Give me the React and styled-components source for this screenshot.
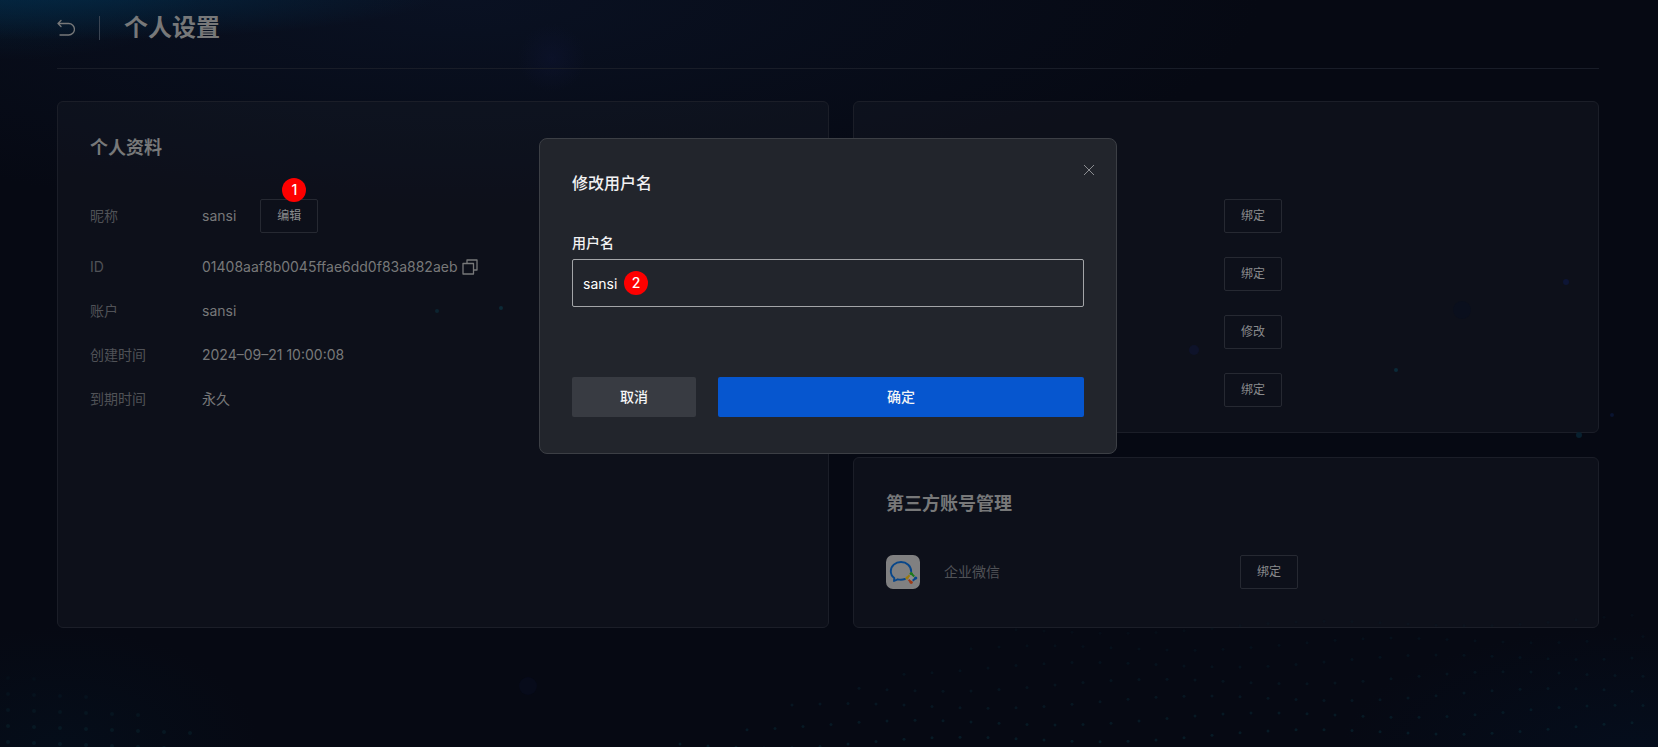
import React, { useState } from "react";
import styled, { createGlobalStyle } from "styled-components";

const Global = createGlobalStyle`
  * { box-sizing: border-box; }
  body {
    margin: 0;
    background: #060913;
    color: #777879;
    font-family: Inter, "Noto Sans CJK SC", sans-serif;
    font-size: 14px;
    line-height: 20px;
  }
  button, input { font: inherit; }
`;

const Page = styled.div`
  position: relative;
  min-height: 100vh;
  padding: 0 59px 0 57px;
  overflow: hidden;
  background:
    radial-gradient(ellipse 380px 50px at 70px -10px, rgba(3, 44, 74, 0.8), rgba(3, 44, 74, 0)),
    radial-gradient(ellipse 200px 60px at 0 0, rgba(4, 38, 62, 0.5), rgba(4, 38, 62, 0)),
    radial-gradient(circle 34px at 552px 58px, rgba(14, 20, 50, 0.5), rgba(14, 20, 50, 0)),
    radial-gradient(ellipse 800px 220px at 460px 0, rgba(10, 18, 36, 0.9), rgba(10, 18, 36, 0)),
    radial-gradient(ellipse 300px 120px at 1640px 747px, rgba(4, 16, 34, 0.6), rgba(4, 16, 34, 0)),
    radial-gradient(ellipse 200px 120px at 60px 747px, rgba(4, 16, 30, 0.6), rgba(4, 16, 30, 0)),
    #060913;
`;

const Particles = styled.svg`
  position: absolute;
  inset: 0;
  width: 100%;
  height: 100%;
  pointer-events: none;
`;

const Header = styled.header`
  display: flex;
  align-items: center;
  height: 69px;
  padding-bottom: 12px;
  border-bottom: 1px solid #191d28;
`;

const IconButton = styled.button`
  display: flex;
  padding: 0;
  border: 0;
  background: none;
  color: inherit;
  cursor: pointer;
`;

const Divider = styled.span`
  width: 1px;
  height: 24px;
  margin: 0 24px;
  background: #3a4452;
`;

const PageTitle = styled.h1`
  margin: 0;
  font-size: 24px;
  line-height: 32px;
  font-weight: 600;
`;

const Columns = styled.main`
  display: grid;
  grid-template-columns: 772fr 746fr;
  gap: 24px;
  margin-top: 32px;
`;

const Stack = styled.div`
  display: flex;
  flex-direction: column;
  gap: 24px;
`;

const Card = styled.section`
  padding: 32px 32px ${(p) => (p.$compact ? 25 : 38)}px;
  border: 1px solid #1b1e28;
  border-radius: 6px;
  background: rgba(30, 33, 42, 0.3);
`;

const CardTitle = styled.h2`
  margin: 0;
  font-size: 18px;
  line-height: 28px;
  font-weight: 600;
`;

const ProfileList = styled.dl`
  display: flex;
  flex-direction: column;
  gap: 24px;
  margin: 37px 0 0;
`;

const ProfileRow = styled.div`
  display: grid;
  grid-template-columns: 112px 1fr;
  align-items: center;
`;

const Term = styled.dt`
  color: #505257;
`;

const Detail = styled.dd`
  display: flex;
  align-items: center;
  gap: ${(p) => p.$gap || 0}px;
  margin: 0;
`;

const OutlineButton = styled.button`
  position: relative;
  width: 58px;
  height: 34px;
  padding: 0;
  border: 1px solid #262932;
  border-radius: 2px;
  background: none;
  color: #8a8b8d;
  font-size: 12px;
  cursor: pointer;
`;

const Badge = styled.span`
  display: flex;
  align-items: center;
  justify-content: center;
  width: 24px;
  height: 24px;
  border-radius: 50%;
  background: #fe0000;
  color: #fff;
  font-size: 14px;
  font-weight: 500;
`;

const EditBadge = styled(Badge)`
  position: absolute;
  top: -22px;
  left: 21px;
`;

const ActionList = styled.div`
  display: flex;
  flex-direction: column;
  gap: 24px;
  margin-top: 37px;
  padding-left: 338px;
`;

const PartnerRow = styled.div`
  display: grid;
  grid-template-columns: 58px 296px auto;
  align-items: center;
  margin-top: 37px;
  color: #505257;
`;

const Overlay = styled.div`
  position: fixed;
  inset: 0;
  display: flex;
  align-items: flex-start;
  justify-content: center;
  padding: 138px 2px 0 0;
`;

const Dialog = styled.form`
  position: relative;
  width: 578px;
  max-width: 100%;
  padding: 32px 32px 36px;
  border: 1px solid #3c3f45;
  border-radius: 8px;
  background: #22252c;
  color: #f2f2f3;
`;

const DialogTitle = styled.h2`
  margin: 0;
  font-size: 16px;
  line-height: 24px;
  font-weight: 500;
`;

const CloseButton = styled(IconButton)`
  position: absolute;
  top: 25px;
  right: 21px;
  color: #8b8d91;
`;

const Label = styled.label`
  display: block;
  margin-top: 38px;
  font-weight: 500;
`;

const Field = styled.div`
  position: relative;
  margin-top: 6px;
`;

const TextInput = styled.input`
  width: 100%;
  height: 48px;
  padding: 0 10px;
  border: 1px solid #a3a5a8;
  border-radius: 2px;
  outline: none;
  background: transparent;
  color: #fff;
`;

const FieldBadge = styled(Badge)`
  position: absolute;
  top: 12px;
  left: 52px;
`;

const Actions = styled.div`
  display: flex;
  gap: 22px;
  margin-top: 70px;
`;

const DialogButton = styled.button`
  flex: ${(p) => (p.$primary ? "1" : "0 0 124px")};
  height: 40px;
  border: 0;
  border-radius: 2px;
  background: ${(p) => (p.$primary ? "#0656cf" : "#383b42")};
  color: #f4f5f6;
  font-weight: 500;
  cursor: pointer;
`;

const BackIcon = () => (
  <svg width="18" height="18" viewBox="0 0 18 18" fill="none" stroke="currentColor" strokeWidth="1.3" strokeLinecap="round" strokeLinejoin="round">
    <path d="M4 1.500 1 4.500l3 3M1 4.500h10.700a5.500 5.500 0 0 1 0 11.500H3" />
  </svg>
);

const CopyIcon = () => (
  <svg width="16" height="16" viewBox="0 0 16 16" fill="none" stroke="currentColor" strokeWidth="1.3" strokeLinejoin="round">
    <path d="M1 4.500h10.500V15H1zM5 4.500V1h10v10h-3.500" />
  </svg>
);

const CloseIcon = () => (
  <svg width="12" height="12" viewBox="0 0 12 12" stroke="currentColor" strokeWidth="1">
    <path d="m1 1 10 10M11 1 1 11" />
  </svg>
);

const WeComLogo = () => (
  <svg width="34" height="34" viewBox="0 0 34 34" fill="none">
    <rect width="34" height="34" rx="7" fill="#808081" />
    <path
      d="M25.200 16.500C25.200 11 20.600 7 15 7S4.800 11 4.800 16.200c0 3 1.300 5.200 3.500 6.800L8 26l3.700-1.700c2.500.7 5 .5 7.300-.3"
      stroke="#08468a"
      strokeWidth="1.900"
      strokeLinejoin="round"
      strokeLinecap="round"
    />
    <path d="m25.200 18.500 4.500 4.500-4.500 4.300-4.200-4.300z" fill="#8c8c8d" />
    <path d="m25.200 18.500 3 3" stroke="#1c7a1c" strokeWidth="2" />
    <path d="m29.700 23-3 2.800" stroke="#08468a" strokeWidth="2" />
    <path d="m25.200 27.300-2.600-2.600" stroke="#9c3a17" strokeWidth="2" />
    <path d="m21 23 2.600-2.800" stroke="#9a7a10" strokeWidth="2" />
    <circle cx="25.200" cy="18.500" r="1.600" fill="#1c7a1c" />
    <circle cx="29.700" cy="23" r="1.600" fill="#08468a" />
    <circle cx="25.200" cy="27.300" r="1.600" fill="#9c3a17" />
    <circle cx="21" cy="23" r="1.600" fill="#9a7a10" />
  </svg>
);

const strayDots = [
  [437, 311, 2, "#0c2430"], [501, 308, 2, "#0c2a36"], [1396, 370, 2, "#0a2a38"],
  [1566, 282, 3, "#0d1535"], [1194, 350, 5, "#0e132a"], [1462, 310, 9, "#0a0f1d"],
  [1579, 435, 3, "#08202f"], [1612, 415, 2, "#0a1430"], [528, 686, 9, "#070b1a"],
];

const waveDots = [];
for (let row = 0; row < 7; row += 1) {
  for (let col = 0; col < 36; col += 1) {
    waveDots.push([
      680 + col * 28 + (row % 2) * 11,
      744 - row * 18 - Math.max(0, col - 5) * 0.6 + Math.sin(col * 0.5 + row) * 4,
      row,
      col,
    ]);
  }
}
const shoreDots = [];
for (let row = 0; row < 5; row += 1) {
  for (let col = 0; col < 10 - row * 2; col += 1) {
    shoreDots.push([8 + col * 26, 742 - row * 16 + col, row]);
  }
}

const rows = [
  { label: "ID", value: "01408aaf8b0045ffae6dd0f83a882aeb", copy: true },
  { label: "账户", value: "sansi" },
  { label: "创建时间", value: "2024–09–21 10:00:08" },
  { label: "到期时间", value: "永久" },
];

export default function App() {
  const [name, setName] = useState("sansi");
  return (
    <>
      <Global />
      <Page>
        <Particles aria-hidden="true">
          {strayDots.map(([x, y, r, fill]) => (
            <circle key={`${x}-${y}`} cx={x} cy={y} r={r} fill={fill} />
          ))}
          {waveDots
            .filter(([, , row, col]) => col >= row * 2)
            .map(([x, y, row]) => (
              <circle key={`${x}-${y}`} cx={x} cy={y} r="1.500" fill="#08222e" opacity={0.75 - row * 0.09} />
            ))}
          {shoreDots.map(([x, y, row]) => (
            <circle key={`${x}-${y}`} cx={x} cy={y} r="2" fill="#08202b" opacity={0.7 - row * 0.12} />
          ))}
        </Particles>
        <Header>
          <IconButton aria-label="返回"><BackIcon /></IconButton>
          <Divider />
          <PageTitle>个人设置</PageTitle>
        </Header>
        <Columns>
          <Card>
            <CardTitle>个人资料</CardTitle>
            <ProfileList>
              <ProfileRow>
                <Term>昵称</Term>
                <Detail $gap={24}>
                  sansi
                  <OutlineButton>编辑<EditBadge>1</EditBadge></OutlineButton>
                </Detail>
              </ProfileRow>
              {rows.map((row) => (
                <ProfileRow key={row.label}>
                  <Term>{row.label}</Term>
                  <Detail $gap={4}>
                    {row.value}
                    {row.copy && <IconButton aria-label="复制"><CopyIcon /></IconButton>}
                  </Detail>
                </ProfileRow>
              ))}
            </ProfileList>
          </Card>
          <Stack>
            <Card $compact>
              <CardTitle>安全管理</CardTitle>
              <ActionList>
                {["绑定", "绑定", "修改", "绑定"].map((text, i) => (
                  <OutlineButton key={i}>{text}</OutlineButton>
                ))}
              </ActionList>
            </Card>
            <Card>
              <CardTitle>第三方账号管理</CardTitle>
              <PartnerRow>
                <WeComLogo />
                <span>企业微信</span>
                <OutlineButton>绑定</OutlineButton>
              </PartnerRow>
            </Card>
          </Stack>
        </Columns>
      </Page>
      <Overlay>
        <Dialog role="dialog" aria-labelledby="dialog-title" onSubmit={(e) => e.preventDefault()}>
          <DialogTitle id="dialog-title">修改用户名</DialogTitle>
          <CloseButton type="button" aria-label="关闭"><CloseIcon /></CloseButton>
          <Label htmlFor="username">用户名</Label>
          <Field>
            <TextInput id="username" value={name} onChange={(e) => setName(e.target.value)} />
            <FieldBadge>2</FieldBadge>
          </Field>
          <Actions>
            <DialogButton type="button">取消</DialogButton>
            <DialogButton $primary>确定</DialogButton>
          </Actions>
        </Dialog>
      </Overlay>
    </>
  );
}
